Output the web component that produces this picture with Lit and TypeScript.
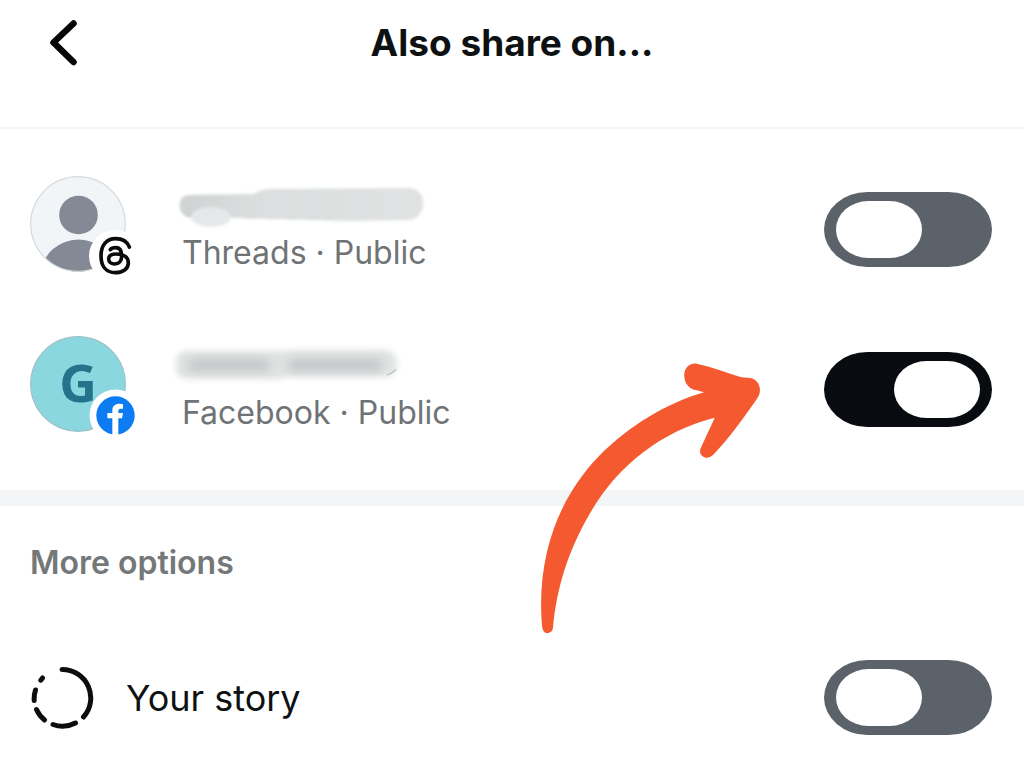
import { LitElement, html, svg, css } from "lit";
import { customElement, property } from "lit/decorators.js";

@customElement("toggle-switch")
class ToggleSwitch extends LitElement {
  static styles = css`
    :host { display: block; flex: none; }
    .switch {
      appearance: none;
      display: flex;
      align-items: center;
      box-sizing: border-box;
      width: 168px;
      height: 75px;
      margin: 0;
      padding: 0 12px;
      border-radius: 44px / 38px;
      background: #5b626a;
      cursor: pointer;
    }
    .switch::before {
      content: "";
      width: 86px;
      height: 57px;
      border-radius: 33px / 29px;
      background: #fff;
    }
    .switch:checked { background: #080c11; justify-content: flex-end; }
  `;
  @property({ type: Boolean }) on = false;
  @property() label = "";

  render() {
    return html`<input class="switch" type="checkbox" role="switch" aria-label=${this.label} .checked=${this.on} />`;
  }
}

const threadsAvatar = svg`
  <defs><clipPath id="face"><circle cx="48" cy="48" r="47.5" /></clipPath></defs>
  <circle cx="48" cy="48" r="47.5" fill="#f2f5f8" />
  <g clip-path="url(#face)" fill="#838995">
    <circle cx="48.500" cy="39" r="19.300" />
    <ellipse cx="48.500" cy="98" rx="37" ry="34.500" />
  </g>
  <circle cx="48" cy="48" r="47.300" fill="none" stroke="#d6d9db" stroke-width="1.200" />
  <circle cx="85" cy="80" r="26" fill="#fff" />
  <g transform="translate(-10 -11) scale(.33333)">
    <path fill="none" stroke="#0b0b0b" stroke-width="11" stroke-linecap="round" stroke-linejoin="round"
      d="M328 246C321 229 305 221 287 221C259 221 243 242 243 272C243 304 259 323 286 323C309 323 325 311 325 294C325 274 308 267 289 267C273 267 266 274 266 282C266 291 274 297 284 297C297 297 305 288 305 272C305 256 298 248 287 248C279 248 274 250 271 254" />
  </g>`;

const facebookAvatar = svg`
  <circle cx="48" cy="48" r="47.300" fill="#8ad7e0" stroke="#9cc0c5" stroke-width="1.200" />
  <text class="initial" x="48" y="66" text-anchor="middle">G</text>
  <circle cx="85.500" cy="79.500" r="26" fill="#fff" />
  <circle cx="85.500" cy="79.500" r="19.200" fill="#0d7bf2" />
  <g transform="translate(-10 -11) scale(.33333)">
    <path fill="#fff" d="M277 330V280H262V264H277V257C277 242 286 236 298 236Q305 236 309 238V251H302C297 251 295 254 295 259V264H309L306 280H295V330Z" />
  </g>`;

const threadsName = svg`
  <defs>
    <filter id="soft" x="-20%" y="-60%" width="140%" height="220%"><feGaussianBlur stdDeviation="1.500" /></filter>
    <linearGradient id="wash"><stop offset="0" stop-color="#cfd2d2" /><stop offset=".35" stop-color="#dcdfdf" /><stop offset="1" stop-color="#e0e2e2" /></linearGradient>
  </defs>
  <g filter="url(#soft)">
    <path fill="#a9adad" d="M-2 20Q-1 28 8 30L14 27Z" />
    <path fill="url(#wash)" d="M7 8L72 7Q80 1 96 2L228 1C246 2 246 32 226 33L168 34L58 31L5 28C-5 25 -5 9 7 8Z" />
    <ellipse cx="29" cy="30" rx="20" ry="10" fill="#e5e8e8" />
    <path fill="none" stroke="#d0d3d3" stroke-width="1" stroke-dasharray="12 8" d="M64 31H150" />
  </g>`;

const facebookName = svg`
  <defs>
    <filter id="haze" x="-20%" y="-60%" width="140%" height="220%"><feGaussianBlur stdDeviation="3" /></filter>
    <filter id="core" x="-20%" y="-200%" width="140%" height="500%"><feGaussianBlur stdDeviation="5" /></filter>
    <filter id="edge" x="-50%" y="-50%" width="200%" height="200%"><feGaussianBlur stdDeviation=".6" /></filter>
  </defs>
  <g filter="url(#haze)">
    <rect x="-6" y="4" width="114" height="28" rx="10" fill="#e0e2e2" />
    <rect x="96" y="3" width="119" height="27" rx="13" fill="#e0e2e2" />
  </g>
  <g filter="url(#core)" fill="#c3c7c7">
    <rect x="6" y="12" width="82" height="12" rx="6" />
    <rect x="106" y="12" width="94" height="12" rx="6" />
  </g>
  <path filter="url(#edge)" d="M205 28Q211 26 214 22" fill="none" stroke="#c4c7c7" stroke-width="1.500" />`;

const accounts = [
  { service: "Threads", on: false, avatar: threadsAvatar, name: threadsName },
  { service: "Facebook", on: true, avatar: facebookAvatar, name: facebookName },
];

@customElement("app-root")
class AppRoot extends LitElement {
  static styles = css`
    :host {
      display: block;
      min-height: 100vh;
      background: #fff;
      color: #0e1112;
      font-family: Inter, "Liberation Sans", sans-serif;
    }
    .page { position: relative; }
    .header {
      display: grid;
      grid-template-columns: 64px 1fr 64px;
      align-items: center;
      padding: 11px 32px 52px;
      border-bottom: 2px solid #f3f4f5;
    }
    .title { margin: 0; text-align: center; font-size: 37px; line-height: 64px; font-weight: 700; }
    .back { height: 64px; padding: 0; border: 0; background: none; cursor: pointer; }
    .back svg { display: block; }
    .accounts { padding: 20px 32px 21px 30px; border-bottom: 16px solid #f3f5f7; }
    .row { display: flex; align-items: center; gap: 40px; height: 160px; }
    .avatar { flex: none; display: block; }
    .initial { font: 700 52px "Open Sans", "Noto Sans", sans-serif; fill: #25738a; }
    .details { flex: 1; display: flex; flex-direction: column; gap: 4px; }
    .name { display: block; overflow: visible; }
    .meta { font-size: 32px; line-height: 36px; color: #6f7375; }
    .options { padding: 37px 32px 36px 30px; }
    .heading { margin: 0; font-size: 32px; line-height: 40px; font-weight: 600; color: #747879; }
    .story { display: flex; align-items: center; gap: 32px; padding-top: 77px; }
    .story svg { flex: none; display: block; }
    .label { flex: 1; font-size: 36px; line-height: 48px; }
    .arrow { position: absolute; top: 360px; right: 260px; pointer-events: none; }
  `;

  render() {
    return html`
      <main class="page">
        <header class="header">
          <button class="back" aria-label="Back">
            <svg width="64" height="64" viewBox="0 0 64 64" fill="none" stroke="#050505" stroke-width="6.500" stroke-linecap="round" stroke-linejoin="round">
              <path d="M41.500 12.500L21.500 31.500L41.500 51" />
            </svg>
          </button>
          <h1 class="title">Also share on...</h1>
        </header>
        <section class="accounts">
          ${accounts.map((a) => html`
            <div class="row">
              <svg class="avatar" width="112" height="106" viewBox="0 0 112 106">${a.avatar}</svg>
              <div class="details">
                <svg class="name" width="250" height="44" viewBox="0 0 250 44">${a.name}</svg>
                <span class="meta">${a.service} · Public</span>
              </div>
              <toggle-switch .label=${`Share on ${a.service}`} .on=${a.on}></toggle-switch>
            </div>`)}
        </section>
        <section class="options">
          <h2 class="heading">More options</h2>
          <div class="story">
            <svg width="64" height="64" viewBox="0 0 64 64" fill="none" stroke="#0b0d0e" stroke-width="5" stroke-linecap="round">
              <path d="M32 3.500A28.500 28.500 0 0 1 53.500 51M45.500 57A28.500 28.500 0 0 1 23 58.500M14.500 54A28.500 28.500 0 0 1 6.500 43.500M4.200 34.500A28.500 28.500 0 0 1 5.500 24M10.800 14.200L12.500 12" />
            </svg>
            <span class="label">Your story</span>
            <toggle-switch .label=${"Your story"}></toggle-switch>
          </div>
        </section>
        <svg class="arrow" width="224" height="276" viewBox="60 30 672 828" aria-hidden="true">
          <path fill="#f4592f" d="M66 828Q68 849 82 850Q98 848 99 832C110 720 140 610 210 490C290 350 420 245 584 203C570 235 555 265 542 295C535 312 550 324 562 323C572 322 576 317 582 312C630 262 670 205 712 145C730 118 716 84 684 83L664 82C620 68 575 50 530 41C505 38 490 60 493 80C495 103 508 116 530 121L552 127C440 160 330 225 235 320C122 438 48 610 66 828Z" />
        </svg>
      </main>`;
  }
}
